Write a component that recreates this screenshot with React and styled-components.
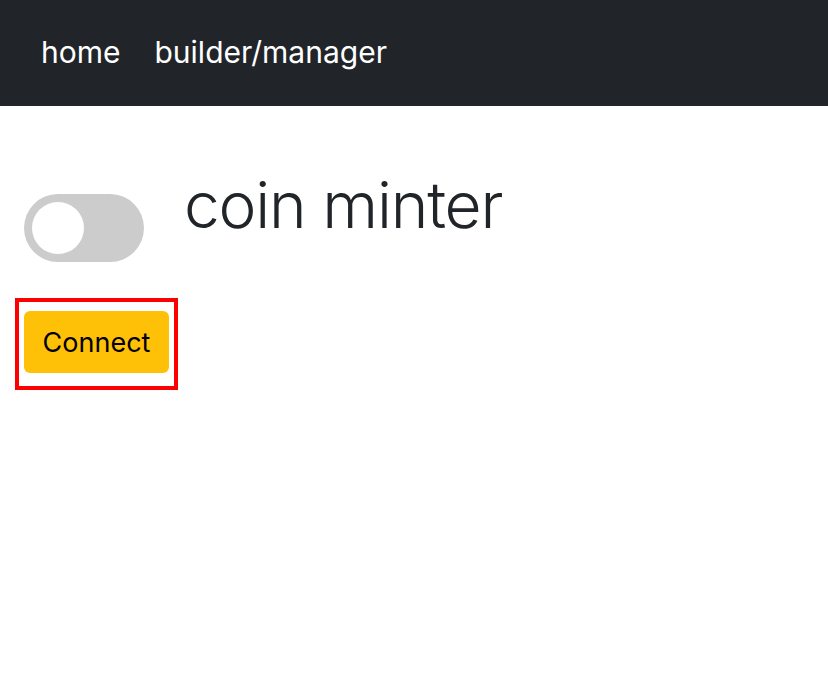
import React from 'react'
import styled, { createGlobalStyle } from 'styled-components'

const Global = createGlobalStyle`
    body {
        margin: 0;
        background: #fff;
        font-family: Inter, "Noto Sans", sans-serif;
        color: #212529;
    }
`

const Nav = styled.nav`
    height: 106px;
    background: #212529;
    display: flex;
    align-items: center;
    padding: 0 41px;
    gap: 34px;
    box-sizing: border-box;
`

const NavLink = styled.a`
    color: #fff;
    font-size: 30px;
    text-decoration: none;
    line-height: 1;
    margin-top: -2px;
`

const Main = styled.main`
    padding: 63px 24px 0;
`

const TitleRow = styled.div`
    display: flex;
    align-items: flex-start;
    gap: 40px;
`

const Switch = styled.label`
    margin-top: 25px;
    width: 120px;
    height: 68px;
    border-radius: 34px;
    background: ${p => (p.$on ? '#2196f3' : '#ccc')};
    display: flex;
    align-items: center;
    padding: 0 8px;
    box-sizing: border-box;
    justify-content: ${p => (p.$on ? 'flex-end' : 'flex-start')};
    cursor: pointer;
`

const Knob = styled.span`
    width: 52px;
    height: 52px;
    border-radius: 50%;
    background: #fff;
`

const Title = styled.h1`
    margin: 0;
    font-size: 64px;
    font-weight: 300;
    letter-spacing: -1.2px;
    line-height: 72px;
    color: #212529;
`

const Highlight = styled.div`
    display: inline-block;
    margin: 36px 0 0 -9px;
    border: 4px solid #ff0000;
    padding: 9px 5px 13px;
`

const Button = styled.button`
    display: block;
    width: 145px;
    height: 62px;
    background: #ffc107;
    border: none;
    border-radius: 6px;
    font-family: Inter, "Noto Sans", sans-serif;
    font-size: 27px;
    color: #000;
    cursor: pointer;
`

export default function App() {
    const [on, setOn] = React.useState(false)
    return (
        <>
            <Global />
            <Nav>
                <NavLink href="#">home</NavLink>
                <NavLink href="#">builder/manager</NavLink>
            </Nav>
            <Main>
                <TitleRow>
                    <Switch $on={on} onClick={() => setOn(!on)}>
                        <Knob />
                    </Switch>
                    <Title>coin minter</Title>
                </TitleRow>
                <Highlight>
                    <Button>Connect</Button>
                </Highlight>
            </Main>
        </>
    )
}
